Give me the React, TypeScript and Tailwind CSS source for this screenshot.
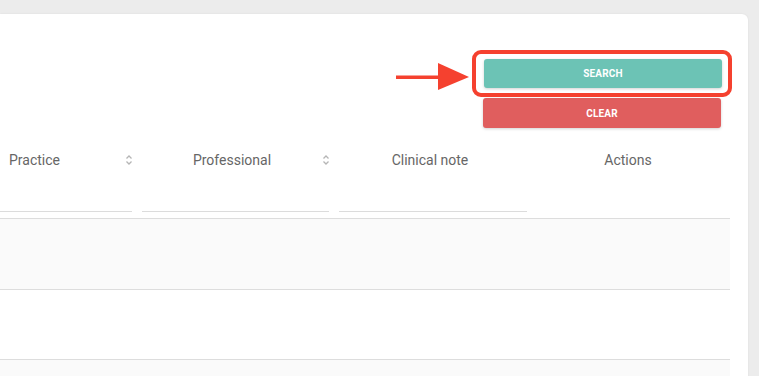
import React from "react";

function SortIcon() {
  return (
    <svg width="8" height="12" viewBox="0 0 8 12" className="shrink-0">
      <path d="M1.5 4.5 L4 2 L6.5 4.5" fill="none" stroke="#b5b5b5" strokeWidth="1.3" />
      <path d="M1.5 7.5 L4 10 L6.5 7.5" fill="none" stroke="#b5b5b5" strokeWidth="1.3" />
    </svg>
  );
}

export default function App() {
  return (
    <div
      className="w-[759px] h-[376px] overflow-hidden bg-[#ececec] pt-[14px]"
      style={{ fontFamily: "Roboto, 'Liberation Sans', sans-serif" }}
    >
      <div className="w-[748px] h-[400px] bg-white rounded-tr-[6px] shadow-[0_0_2px_rgba(0,0,0,0.08)]">
        {/* buttons */}
        <div className="flex justify-end pr-[26px] pt-[45px]">
          <div className="relative flex flex-col gap-[10px] w-[239px]">
            <button className="h-[29px] w-[238px] ml-[1px] rounded-[3px] bg-[#6cc3b5] text-white text-[10px] font-bold tracking-[0.2px] shadow-[0_1px_3px_rgba(0,0,0,0.18)]">
              SEARCH
            </button>
            <button className="h-[30px] w-[238px] rounded-[3px] bg-[#e05e5e] text-white text-[10px] font-bold tracking-[0.2px] shadow-[0_1px_3px_rgba(0,0,0,0.18)]">
              CLEAR
            </button>
            {/* annotation box */}
            <div className="absolute left-[-11px] top-[-9px] w-[260px] h-[47px] rounded-[9px] border-[4px] border-[#f5412f]" />
            {/* annotation arrow */}
            <svg
              className="absolute left-[-87px] top-[1px]"
              width="76"
              height="30"
              viewBox="0 0 76 30"
            >
              <rect x="0" y="15.5" width="46" height="3.5" fill="#f5412f" />
              <polygon points="42,3 73,17 42,30" fill="#f5412f" />
            </svg>
          </div>
        </div>

        {/* table */}
        <div className="w-[730px] mt-[22px] text-[14px] text-[#666666]">
          <div className="grid grid-cols-[137px_197px_198px_198px]">
            <div className="flex items-center justify-between pl-[9px] pr-[4px] h-[20px]">
              <span>Practice</span>
              <SortIcon />
            </div>
            <div className="relative flex items-center justify-center h-[20px]">
              <span className="ml-[-7px]">Professional</span>
              <div className="absolute right-[4px] top-[4px]">
                <SortIcon />
              </div>
            </div>
            <div className="flex items-center justify-center h-[20px]">
              <span className="ml-[-6px]">Clinical note</span>
            </div>
            <div className="flex items-center justify-center h-[20px]">
              <span className="ml-[-6px]">Actions</span>
            </div>
          </div>
          {/* filter row */}
          <div className="grid grid-cols-[137px_197px_198px_198px] h-[42px]">
            <div className="pr-[5px] flex items-end">
              <div className="w-full border-b border-[#dcdcdc]" />
            </div>
            <div className="px-[5px] flex items-end">
              <div className="w-full border-b border-[#dcdcdc]" />
            </div>
            <div className="pl-[5px] pr-[5px] flex items-end">
              <div className="w-full border-b border-[#dcdcdc]" />
            </div>
            <div />
          </div>
          <div className="h-[6px]" />
          <div className="border-t border-[#dddddd] bg-[#fafafa] h-[71px]" />
          <div className="border-t border-[#dddddd] bg-white h-[70px]" />
          <div className="border-t border-[#dddddd] bg-[#fafafa] h-[40px]" />
        </div>
      </div>
    </div>
  );
}
